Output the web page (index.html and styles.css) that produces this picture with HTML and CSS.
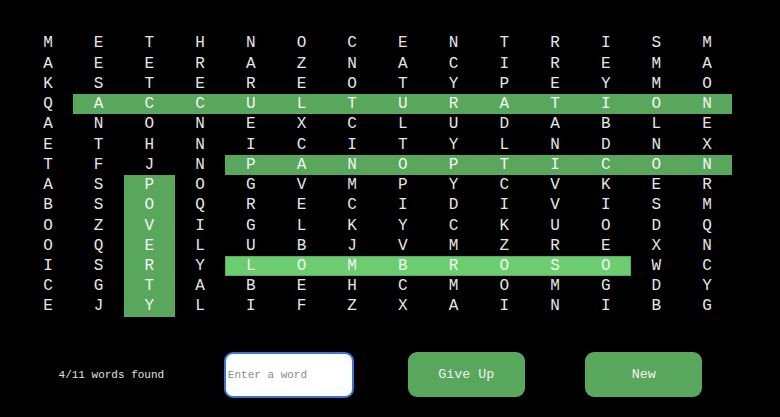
FILE: index.html
```html
<!DOCTYPE html>
<html lang="en">
<head>
<meta charset="utf-8">
<title>Word Search</title>
<link rel="stylesheet" href="styles.css">
</head>
<body>
<main class="app">
  <div class="board">
    <span>M</span><span>E</span><span>T</span><span>H</span><span>N</span><span>O</span><span>C</span><span>E</span><span>N</span><span>T</span><span>R</span><span>I</span><span>S</span><span>M</span>
    <span>A</span><span>E</span><span>E</span><span>R</span><span>A</span><span>Z</span><span>N</span><span>A</span><span>C</span><span>I</span><span>R</span><span>E</span><span>M</span><span>A</span>
    <span>K</span><span>S</span><span>T</span><span>E</span><span>R</span><span>E</span><span>O</span><span>T</span><span>Y</span><span>P</span><span>E</span><span>Y</span><span>M</span><span>O</span>
    <span>Q</span><span class="h">A</span><span class="h">C</span><span class="h">C</span><span class="h">U</span><span class="h">L</span><span class="h">T</span><span class="h">U</span><span class="h">R</span><span class="h">A</span><span class="h">T</span><span class="h">I</span><span class="h">O</span><span class="h">N</span>
    <span>A</span><span>N</span><span>O</span><span>N</span><span>E</span><span>X</span><span>C</span><span>L</span><span>U</span><span>D</span><span>A</span><span>B</span><span>L</span><span>E</span>
    <span>E</span><span>T</span><span>H</span><span>N</span><span>I</span><span>C</span><span>I</span><span>T</span><span>Y</span><span>L</span><span>N</span><span>D</span><span>N</span><span>X</span>
    <span>T</span><span>F</span><span>J</span><span>N</span><span class="h">P</span><span class="h">A</span><span class="h">N</span><span class="h">O</span><span class="h">P</span><span class="h">T</span><span class="h">I</span><span class="h">C</span><span class="h">O</span><span class="h">N</span>
    <span>A</span><span>S</span><span class="h">P</span><span>O</span><span>G</span><span>V</span><span>M</span><span>P</span><span>Y</span><span>C</span><span>V</span><span>K</span><span>E</span><span>R</span>
    <span>B</span><span>S</span><span class="h">O</span><span>Q</span><span>R</span><span>E</span><span>C</span><span>I</span><span>D</span><span>I</span><span>V</span><span>I</span><span>S</span><span>M</span>
    <span>O</span><span>Z</span><span class="h">V</span><span>I</span><span>G</span><span>L</span><span>K</span><span>Y</span><span>C</span><span>K</span><span>U</span><span>O</span><span>D</span><span>Q</span>
    <span>O</span><span>Q</span><span class="h">E</span><span>L</span><span>U</span><span>B</span><span>J</span><span>V</span><span>M</span><span>Z</span><span>R</span><span>E</span><span>X</span><span>N</span>
    <span>I</span><span>S</span><span class="h">R</span><span>Y</span><span class="l ls">L</span><span class="l">O</span><span class="l">M</span><span class="l">B</span><span class="l">R</span><span class="l">O</span><span class="l">S</span><span class="l le">O</span><span>W</span><span>C</span>
    <span>C</span><span>G</span><span class="h">T</span><span>A</span><span>B</span><span>E</span><span>H</span><span>C</span><span>M</span><span>O</span><span>M</span><span>G</span><span>D</span><span>Y</span>
    <span>E</span><span>J</span><span class="h">Y</span><span>L</span><span>I</span><span>F</span><span>Z</span><span>X</span><span>A</span><span>I</span><span>N</span><span>I</span><span>B</span><span>G</span>
  </div>
  <div class="controls">
    <div class="cell"><span class="status">4/11 words found</span></div>
    <div class="cell"><input class="word" type="text" placeholder="Enter a word" autofocus></div>
    <div class="cell"><button class="btn" type="button">Give Up</button></div>
    <div class="cell"><button class="btn" type="button">New</button></div>
  </div>
</main>
</body>
</html>
```

FILE: styles.css
```css
html, body {
  margin: 0;
  padding: 0;
  background: #000;
}

.app {
  width: 710px;
  padding: 33.3px 0 0 22.6px;
  font-family: "Liberation Mono", "Courier New", monospace;
}

.board {
  display: grid;
  grid-template-columns: repeat(14, 50.71px);
  grid-auto-rows: 20.24px;
}

.board span {
  display: flex;
  align-items: center;
  justify-content: center;
  font-size: 16px;
  color: #e6e6e6;
}

.board .h {
  background: #59a65d;
  color: #f4f4f4;
}

.board .l {
  background: #6bcd6f;
  color: #f4f4f4;
  box-shadow: inset 0 1px 0 #5aa95d, inset 0 -1px 0 #5aa95d;
}

.board .ls {
  box-shadow: inset 0 1px 0 #5aa95d, inset 0 -1px 0 #5aa95d, inset 1px 0 0 #5aa95d;
}

.board .le {
  box-shadow: inset 0 1px 0 #5aa95d, inset 0 -1px 0 #5aa95d, inset -1px 0 0 #5aa95d;
}

.controls {
  display: grid;
  grid-template-columns: repeat(4, 1fr);
  margin-top: 35px;
  height: 46px;
}

.cell {
  display: flex;
  align-items: center;
  justify-content: center;
}

.status {
  font-size: 11px;
  color: #e0e0e0;
}

.word {
  box-sizing: border-box;
  width: 130px;
  height: 46px;
  border: 2px solid #3d73d9;
  border-radius: 9px;
  padding: 0 2px;
  background: #fff;
  font-family: "Liberation Mono", "Courier New", monospace;
  font-size: 11px;
  color: #222;
  outline: none;
}

.word::placeholder {
  color: #8a8a8a;
}

.btn {
  box-sizing: border-box;
  width: 117px;
  height: 45px;
  border: none;
  border-radius: 9px;
  background: #59a65d;
  color: #f2f2f2;
  font-family: "Liberation Mono", "Courier New", monospace;
  font-size: 13.33px;
  margin-top: -1px;
}
```
